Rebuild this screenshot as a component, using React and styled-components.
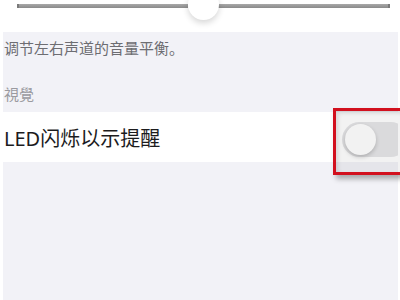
import styled, { createGlobalStyle } from 'styled-components';

const GlobalStyle = createGlobalStyle`
  html, body {
    margin: 0;
    padding: 0;
    background: #ffffff;
  }
  body {
    font-family: "Noto Sans", "Noto Sans CJK SC", sans-serif;
  }
`;

const Page = styled.div`
  position: relative;
  width: 400px;
  height: 300px;
  overflow: hidden;
  background: #ffffff;
  padding: 0 2px 0 3px;
  box-sizing: border-box;
  display: flex;
  flex-direction: column;
`;

const SliderBar = styled.div`
  position: relative;
  height: 32px;
  flex: none;
  display: flex;
  align-items: flex-start;
  padding: 4px 8px 0 14px;
  box-sizing: border-box;
`;

const TrackPart = styled.div`
  height: 4px;
  background: linear-gradient(#a8a8a8, #8a8a8a);
  flex: ${props => props.grow};
  border-left: ${props => props.cap === 'left' ? '2px solid #7a7a7a' : 'none'};
  border-right: ${props => props.cap === 'right' ? '2px solid #7a7a7a' : 'none'};
`;

const ThumbGap = styled.div`
  width: 30px;
  flex: none;
`;

const Thumb = styled.div`
  position: absolute;
  left: 185px;
  top: -11px;
  width: 31px;
  height: 31px;
  border-radius: 50%;
  background: #ffffff;
  box-shadow: 0 3px 6px rgba(0, 0, 0, 0.16);
`;

const Grouped = styled.div`
  flex: 1;
  background: #f2f2f7;
  display: flex;
  flex-direction: column;
`;

const Footnote = styled.div`
  padding: 7px 0 0 1px;
  font-size: 15px;
  line-height: 18px;
  color: #6d6d72;
`;

const SectionHeader = styled.div`
  margin-top: 28px;
  padding: 0 0 9px 1px;
  font-family: "Noto Sans CJK TC", sans-serif;
  font-size: 15px;
  line-height: 18px;
  color: #9a9aa0;
`;

const Row = styled.div`
  height: 50px;
  background: #ffffff;
  display: flex;
  align-items: center;
  padding-left: 1px;
  overflow: hidden;
`;

const RowLabel = styled.div`
  flex: 1;
  font-size: 20px;
  color: #1c1c1e;
`;

const Toggle = styled.div`
  width: 66px;
  height: 35px;
  margin-right: -10px;
  margin-top: 4px;
  border-radius: 18px;
  background: #e6e6e8;
  display: flex;
  align-items: center;
  padding: 0 3px;
  box-sizing: border-box;
`;

const Knob = styled.div`
  width: 31px;
  height: 31px;
  border-radius: 50%;
  background: #ffffff;
  box-shadow: 0 2px 4px rgba(0, 0, 0, 0.2);
`;

const Highlight = styled.div`
  position: absolute;
  left: 333px;
  top: 108px;
  width: 72px;
  height: 67px;
  box-sizing: border-box;
  border: 3px solid #d2101e;
  background: rgba(0, 0, 0, 0.05);
  box-shadow: 3px 4px 5px rgba(0, 0, 0, 0.3), inset 2px 2px 4px rgba(0, 0, 0, 0.12);
  pointer-events: none;
`;

export default function App() {
  return (
    <Page>
      <GlobalStyle />
      <SliderBar>
        <TrackPart grow="171" cap="left" />
        <ThumbGap />
        <TrackPart grow="172" cap="right" />
        <Thumb />
      </SliderBar>
      <Grouped>
        <Footnote>调节左右声道的音量平衡。</Footnote>
        <SectionHeader>視覺</SectionHeader>
        <Row>
          <RowLabel>LED闪烁以示提醒</RowLabel>
          <Toggle>
            <Knob />
          </Toggle>
        </Row>
      </Grouped>
      <Highlight />
    </Page>
  );
}
